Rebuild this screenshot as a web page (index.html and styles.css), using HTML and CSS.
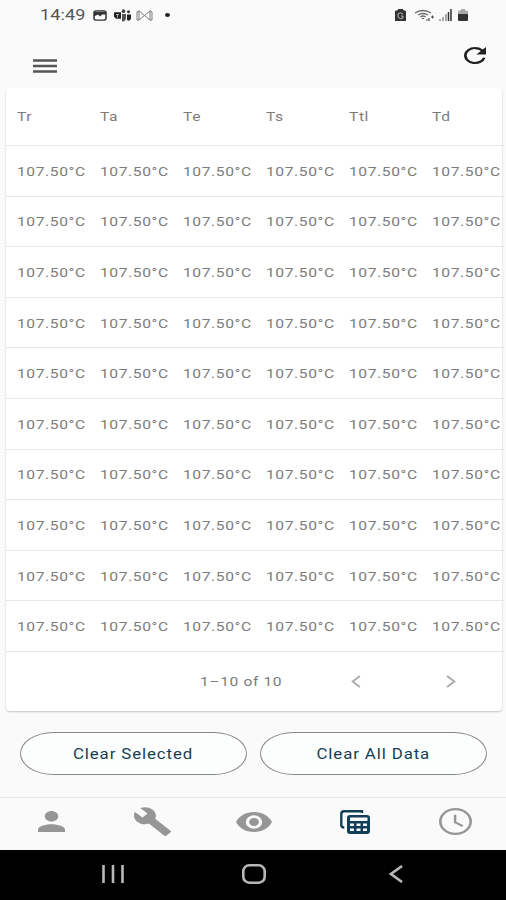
FILE: index.html
```
<!DOCTYPE html>
<html lang="en">
<head>
    <meta charset="UTF-8">
    <title>Temperature Data</title>
    <meta name="viewport" content="width=device-width, initial-scale=1.0">
    <link rel="stylesheet" href="styles.css">
</head>
<body>
    <div class="status-bar">
        <span class="clock wide">14:49</span>
        <svg class="status-picture" viewBox="0 0 14 12" preserveAspectRatio="none">
            <rect x="1" y="1" width="12" height="10" rx="2" fill="none" stroke="#333" stroke-width="1.5"/>
            <path d="M1 2h12v3H9L7 7 5 5 1 7z" fill="#333"/>
        </svg>
        <svg class="status-teams" viewBox="0 0 17 12" preserveAspectRatio="none">
            <path d="M0 3h7v6H2L0 7z" fill="#222"/>
            <path d="M2 5h3M3.500 5v3" stroke="#aaa"/>
            <circle cx="9.500" cy="2" r="1.800" fill="#444"/>
            <circle cx="14.500" cy="2.500" r="1.400" fill="#333"/>
            <path d="M8 4.500h4V9q-1 3-4 2.500z" fill="#555"/>
            <path d="M13 5h4v4q-2 3-4 1z" fill="#222"/>
        </svg>
        <svg class="status-mail" viewBox="0 0 17 12" preserveAspectRatio="none">
            <path d="M3 11H1V2l2-1 5.500 5L14 1l2 1v9h-2M3 1v10l5.500-5L14 11V1" fill="none" stroke="#777" stroke-width="1"/>
        </svg>
        <span class="status-dot"></span>
        <div class="status-right">
            <svg class="status-saver" viewBox="0 0 11 12" preserveAspectRatio="none">
                <path d="M3 0h5v1l3 1v10H0V2l3-1z" fill="#333"/>
                <path d="M8 5Q5.500 2.500 3 5v3q2 3 5 1V7H6" fill="none" stroke="#bbb" stroke-width="1"/>
            </svg>
            <svg class="status-wifi" viewBox="0 0 20 13" preserveAspectRatio="none">
                <path d="M1 4Q9-1 17 4M4 6q5-3 10 0M6.500 8q2.500-2 5 0" fill="none" stroke="#666" stroke-width="1.300"/>
                <path d="M8 9.500h2M12 11h3M15 12V9M17 8h3M18.500 6.500v3" stroke="#555" stroke-width="1.200"/>
            </svg>
            <svg class="status-signal" viewBox="0 0 13 12" preserveAspectRatio="none">
                <path d="M1 10v2M4 8v4M7 5v7" stroke="#777" stroke-width="1.200"/>
                <path d="M9.500 3v9M12 0v12" stroke="#333" stroke-width="1.500"/>
            </svg>
            <svg class="status-battery" viewBox="0 0 10 12" preserveAspectRatio="none">
                <path d="M3 0h4v1.500h2q1 0 1 1V5H0V2.500q0-1 1-1h2z" fill="#aaa"/>
                <path d="M0 5h10v6q0 1-1 1H1q-1 0-1-1z" fill="#333"/>
            </svg>
        </div>
    </div>

    <header class="app-bar">
        <svg class="menu-icon" viewBox="0 0 24 14" preserveAspectRatio="none">
            <path d="M0 1.500h24M0 7h24M0 12.500h24" stroke="#555" stroke-width="2.300"/>
        </svg>
        <svg class="refresh-icon" viewBox="4 4 16 16" preserveAspectRatio="none">
            <path d="M17.650 6.350A7.958 7.958 0 0 0 12 4a8 8 0 1 0 7.730 10h-2.080A6 6 0 1 1 12 6c1.660 0 3.140.690 4.220 1.780L13 11h7V4z" fill="#222"/>
        </svg>
    </header>

    <main>
        <table class="data-table">
            <thead>
                <tr>
                    <th><span class="wide">Tr</span></th>
                    <th><span class="wide">Ta</span></th>
                    <th><span class="wide">Te</span></th>
                    <th><span class="wide">Ts</span></th>
                    <th><span class="wide">Ttl</span></th>
                    <th><span class="wide">Td</span></th>
                </tr>
            </thead>
            <tbody id="rows"></tbody>
        </table>
        <div class="pagination">
            <span class="page-range"><span class="wide">1–10 of 10</span></span>
            <svg class="page-arrow" viewBox="0 0 9 12" preserveAspectRatio="none">
                <path d="M8 1L1.500 6 8 11" fill="none" stroke="#aaa" stroke-width="1.700"/>
            </svg>
            <svg class="page-arrow" viewBox="0 0 9 12" preserveAspectRatio="none">
                <path d="M1 1l6.500 5L1 11" fill="none" stroke="#aaa" stroke-width="1.700"/>
            </svg>
        </div>
    </main>

    <div class="actions">
        <button><span class="wide">Clear Selected</span></button>
        <button><span class="wide">Clear All Data</span></button>
    </div>

    <nav class="tabs">
        <a href="#"><svg class="tab-person" viewBox="4 4 16 16" preserveAspectRatio="none">
            <path d="M12 12c2.210 0 4-1.790 4-4s-1.790-4-4-4-4 1.790-4 4 1.790 4 4 4zm0 2c-2.670 0-8 1.340-8 4v2h16v-2c0-2.660-5.330-4-8-4z"/>
        </svg></a>
        <a href="#"><svg class="tab-wrench" viewBox="1 1 22 22" preserveAspectRatio="none">
            <path d="M22.700 19l-9.100-9.100c.900-2.300.400-5-1.500-6.900-2-2-5-2.400-7.400-1.300L9 6 6 9 1.600 4.700C.400 7.100.900 10.100 2.900 12.100c1.900 1.900 4.600 2.400 6.900 1.500l9.100 9.100c.400.400 1 .400 1.400 0l2.300-2.300c.500-.400.500-1.100.100-1.400z"/>
        </svg></a>
        <a href="#"><svg class="tab-eye" viewBox="1 4.500 22 15" preserveAspectRatio="none">
            <path d="M12 4.500C7 4.500 2.730 7.610 1 12c1.730 4.390 6 7.500 11 7.500s9.270-3.110 11-7.500c-1.730-4.390-6-7.500-11-7.500zM12 17a5 5 0 1 1 0-10 5 5 0 0 1 0 10zm0-8a3 3 0 1 0 0 6 3 3 0 0 0 0-6z"/>
        </svg></a>
        <a href="#" class="active"><svg class="tab-table" viewBox="0 0 30 24" preserveAspectRatio="none">
            <path d="M22 3V1.200H4Q1.300 1.200 1.300 4v11q0 2.500 3 2.500" fill="none" stroke="#123e59" stroke-width="2.400"/>
            <path fill-rule="evenodd" d="M10 5h17q3 0 3 3v13q0 3-3 3H10q-3 0-3-3V8q0-3 3-3zM10 7.500V11h17.500V7.500zM10 13.500v2.500h4v-2.500zM16.500 13.500v2.500h4v-2.500zM23 13.500v2.500h4v-2.500zM10 18.500V21h4v-2.500zM16.500 18.500V21h4v-2.500zM23 18.500V21h4v-2.500z"/>
        </svg></a>
        <a href="#"><svg class="tab-clock" viewBox="2 2 20 20" preserveAspectRatio="none">
            <path d="M12 2a10 10 0 1 0 0 20 10 10 0 0 0 0-20zm0 18.400a8.400 8.400 0 1 1 0-16.800 8.400 8.400 0 0 1 0 16.800zM12.500 7H11v6l5 3 .8-1.300-4.300-2.600z"/>
        </svg></a>
    </nav>

    <footer class="system-nav">
        <svg class="sys-recent" viewBox="0 0 22 18" preserveAspectRatio="none">
            <path d="M1.500 0v18M11 0v18M20.500 0v18"/>
        </svg>
        <svg class="sys-home" viewBox="0 0 24 20" preserveAspectRatio="none">
            <rect x="1.300" y="1.300" width="21.400" height="17.400" rx="6"/>
        </svg>
        <svg class="sys-back" viewBox="0 0 14 18" preserveAspectRatio="none">
            <path d="M13 1L2 9l11 8"/>
        </svg>
    </footer>

    <script>
        const columns = ['Tr', 'Ta', 'Te', 'Ts', 'Ttl', 'Td'];
        const rows = document.getElementById('rows');

        for (let i = 0; i < 10; i++) {
            const row = rows.insertRow();
            columns.forEach(() => {
                row.insertCell().innerHTML = '<span class="wide">107.50°C</span>';
            });
        }
    </script>
</body>
</html>
```
FILE: styles.css
```
* {
    box-sizing: border-box;
}
body {
    font-family: Roboto, "Liberation Sans", sans-serif;
    margin: 0;
    height: 900px;
    background: #fafafa;
    color: #7c7c7c;
    overflow: hidden;
    display: flex;
    flex-direction: column;
}
svg {
    display: block;
    flex: none;
}
/* stretched lettering */
.wide {
    display: inline-block;
    transform: scaleX(1.2);
    transform-origin: left;
    white-space: nowrap;
}
.status-bar {
    height: 30px;
    padding: 0 38px 0 40px;
    display: flex;
    align-items: center;
    color: #555;
}
.clock {
    width: 53px;
    font-size: 15px;
    letter-spacing: 0.1px;
}
.status-picture {
    width: 14px;
    height: 11px;
}
.status-teams {
    width: 17px;
    height: 13px;
    margin-left: 7px;
}
.status-mail {
    width: 17px;
    height: 11px;
    margin-left: 5px;
}
.status-dot {
    width: 5px;
    height: 4px;
    margin-left: 12px;
    border-radius: 50%;
    background: #222;
}
.status-right {
    display: flex;
    align-items: center;
    margin-left: auto;
}
.status-saver {
    width: 11px;
    height: 12px;
}
.status-wifi {
    width: 20px;
    height: 13px;
    margin-left: 8px;
}
.status-signal {
    width: 13px;
    height: 12px;
    margin-left: 5px;
}
.status-battery {
    width: 10px;
    height: 12px;
    margin-left: 6px;
}
.app-bar {
    height: 58px;
    padding: 17px 20px 0 33px;
    display: flex;
    justify-content: space-between;
}
.menu-icon {
    width: 24px;
    height: 14px;
    margin-top: 12px;
}
.refresh-icon {
    width: 22px;
    height: 17px;
}
main {
    height: 623px;
    margin: 0 4px 0 6px;
    background: #fff;
    border-radius: 4px;
    box-shadow: 0 1px 2px rgba(0,0,0,0.22);
}
.data-table {
    width: 498px;
    table-layout: fixed;
    border-collapse: separate;
    border-spacing: 0;
    font-size: 13px;
    letter-spacing: 0.5px;
}
.data-table th,
.data-table td {
    height: 50.6px;
    padding: 1px 0 0 11px;
    text-align: left;
    font-weight: 400;
    border-bottom: 1px solid #e6e6e6;
}
.data-table th {
    height: 58px;
    padding-top: 0;
}
.pagination {
    height: 59px;
    display: flex;
    align-items: center;
    font-size: 13px;
    letter-spacing: 0.5px;
}
.page-range {
    width: 151px;
    margin-left: 194px;
}
.page-arrow {
    width: 10px;
    height: 13px;
}
.page-arrow + .page-arrow {
    margin-left: 85px;
}
.actions {
    height: 86px;
    padding: 21px 19px 0 20px;
    display: flex;
    gap: 13px;
}
.actions button {
    flex: 1;
    height: 43px;
    padding: 0;
    border: 1px solid #888;
    border-radius: 34px / 22px;
    background: #fcfdfd;
    color: #153e55;
    font: 400 14px Roboto, "Liberation Sans", sans-serif;
    letter-spacing: 0.75px;
}
.actions .wide {
    transform-origin: center;
}
.tabs {
    height: 53px;
    border-top: 1px solid #e8e8e8;
    display: flex;
}
.tabs a {
    flex: 1;
    display: flex;
    align-items: center;
    justify-content: center;
    padding: 0 0 5px 1px;
    fill: #969696;
}
.tabs a.active {
    fill: #123e59;
}
.tab-person {
    width: 27px;
    height: 21px;
}
.tab-wrench {
    width: 37px;
    height: 29px;
}
.tab-eye {
    width: 36px;
    height: 20px;
}
.tab-table {
    width: 30px;
    height: 24px;
}
.tab-clock {
    width: 33px;
    height: 27px;
}
.system-nav {
    height: 50px;
    padding: 0 103px 2px 102px;
    background: #000;
    display: flex;
    align-items: center;
    fill: none;
    stroke: #b8b8b8;
    stroke-width: 2.6;
}
.sys-recent {
    width: 22px;
    height: 18px;
}
.sys-home {
    width: 24px;
    height: 20px;
    margin-left: 118px;
}
.sys-back {
    width: 14px;
    height: 18px;
    margin-left: auto;
}
```
